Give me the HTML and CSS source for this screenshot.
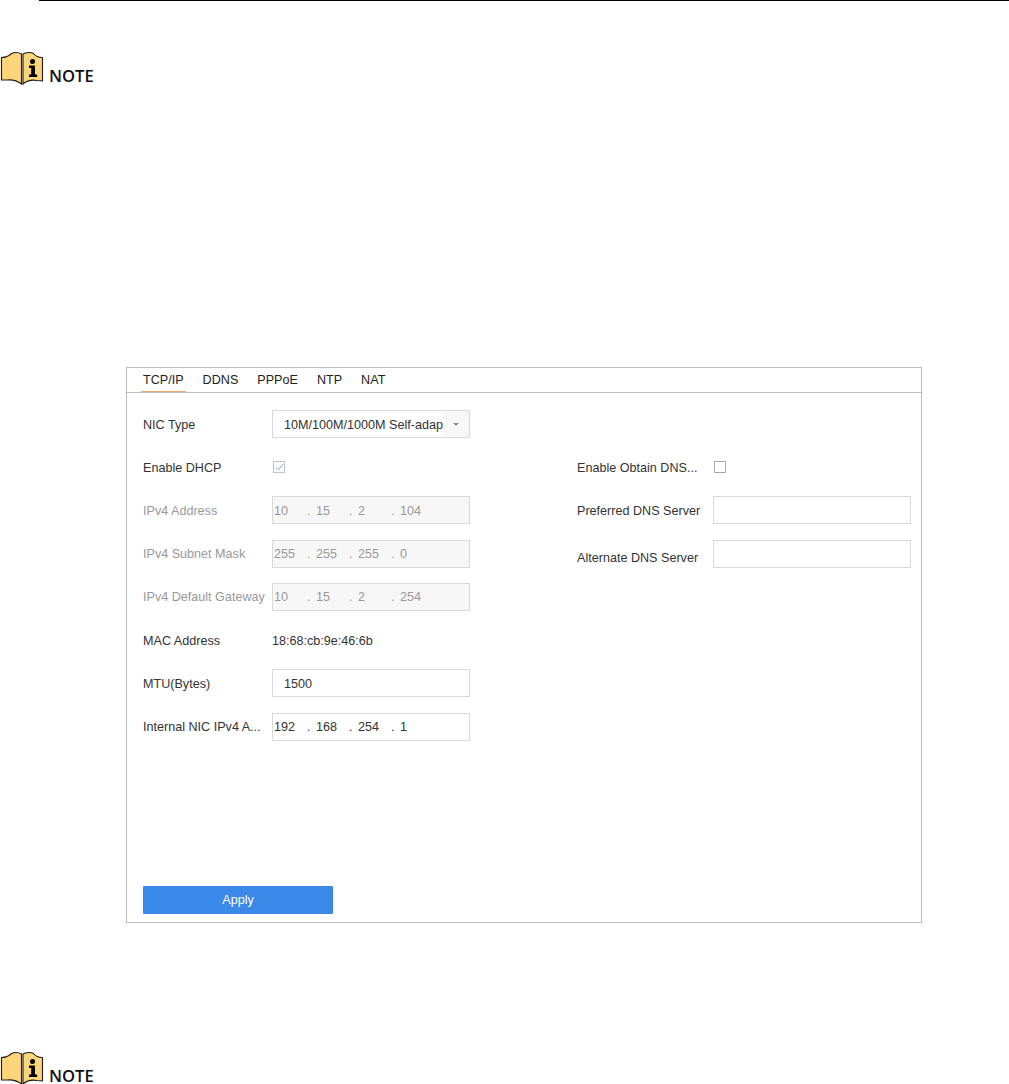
FILE: index.html
```html
<!DOCTYPE html>
<html lang="en">
<head>
<meta charset="utf-8">
<title>Network settings</title>
<link rel="stylesheet" href="styles.css">
</head>
<body>
<div class="page">
  <hr class="top-rule">
  <div class="note note-first">
    <svg class="note-icon" width="44" height="34" viewBox="0 0 44 34" aria-hidden="true">
      <path d="M1.5 6.5 C6 6.5 9 5 11.5 2.5 C15 1 19 1.5 21.5 3 L21.5 33 C17 29.5 12 28.5 7 29 L1.5 29 Z" fill="#fdd47a" stroke="#1c1c14" stroke-width="1.1"/>
      <path d="M23 3 C26 1.2 31 1 33.5 2.5 C35.5 5 38 6.5 42.5 6.5 L42.5 30 L37 29.5 C32 28.5 27 29.5 23 33 Z" fill="#fdd47a" stroke="#1c1c14" stroke-width="1.1"/>
      <circle cx="32.5" cy="10.5" r="2.5" fill="#000"/>
      <path d="M29 14.5 H35 V23.5 H37.2 V26 H29 V23.5 H31.2 V17 H29 Z" fill="#000"/>
    </svg>
    <span class="note-label">NOTE</span>
  </div>

  <section class="panel">
    <nav class="tabs">
      <span class="tab tab-active">TCP/IP</span>
      <span class="tab">DDNS</span>
      <span class="tab">PPPoE</span>
      <span class="tab">NTP</span>
      <span class="tab">NAT</span>
    </nav>
    <div class="form">
      <div class="col col-left">
        <div class="row">
          <span class="label">NIC Type</span>
          <div class="field field-select">
            <span class="select-value">10M/100M/1000M Self-adaptive</span>
            <span class="select-arrow"><i class="caret"></i></span>
          </div>
        </div>
        <div class="row">
          <span class="label">Enable DHCP</span>
          <span class="check check-on">
            <svg width="9" height="8" viewBox="0 0 9 8" aria-hidden="true"><path d="M1 4.5 L3.5 6.8 L8 1.2" fill="none" stroke="#7aa6dc" stroke-width="1"/></svg>
          </span>
        </div>
        <div class="row row-off">
          <span class="label">IPv4 Address</span>
          <div class="field field-ip field-off"><span class="oct">10</span><span class="dot">.</span><span class="oct">15</span><span class="dot">.</span><span class="oct">2</span><span class="dot">.</span><span class="oct">104</span></div>
        </div>
        <div class="row row-off">
          <span class="label">IPv4 Subnet Mask</span>
          <div class="field field-ip field-off"><span class="oct">255</span><span class="dot">.</span><span class="oct">255</span><span class="dot">.</span><span class="oct">255</span><span class="dot">.</span><span class="oct">0</span></div>
        </div>
        <div class="row row-off">
          <span class="label">IPv4 Default Gateway</span>
          <div class="field field-ip field-off"><span class="oct">10</span><span class="dot">.</span><span class="oct">15</span><span class="dot">.</span><span class="oct">2</span><span class="dot">.</span><span class="oct">254</span></div>
        </div>
        <div class="row">
          <span class="label">MAC Address</span>
          <span class="value">18:68:cb:9e:46:6b</span>
        </div>
        <div class="row">
          <span class="label">MTU(Bytes)</span>
          <div class="field field-text">1500</div>
        </div>
        <div class="row">
          <span class="label">Internal NIC IPv4 A...</span>
          <div class="field field-ip"><span class="oct">192</span><span class="dot">.</span><span class="oct">168</span><span class="dot">.</span><span class="oct">254</span><span class="dot">.</span><span class="oct">1</span></div>
        </div>
      </div>
      <div class="col col-right">
        <div class="row">
          <span class="label label-wide">Enable Obtain DNS...</span>
          <span class="check"></span>
        </div>
        <div class="row">
          <span class="label label-wide">Preferred DNS Server</span>
          <div class="field"></div>
        </div>
        <div class="row">
          <span class="label label-wide label-low">Alternate DNS Server</span>
          <div class="field"></div>
        </div>
      </div>
    </div>
    <button class="apply" type="button">Apply</button>
  </section>

  <div class="note note-last">
    <svg class="note-icon" width="44" height="34" viewBox="0 0 44 34" aria-hidden="true">
      <path d="M1.5 6.5 C6 6.5 9 5 11.5 2.5 C15 1 19 1.5 21.5 3 L21.5 33 C17 29.5 12 28.5 7 29 L1.5 29 Z" fill="#fdd47a" stroke="#1c1c14" stroke-width="1.1"/>
      <path d="M23 3 C26 1.2 31 1 33.5 2.5 C35.5 5 38 6.5 42.5 6.5 L42.5 30 L37 29.5 C32 28.5 27 29.5 23 33 Z" fill="#fdd47a" stroke="#1c1c14" stroke-width="1.1"/>
      <circle cx="32.5" cy="10.5" r="2.5" fill="#000"/>
      <path d="M29 14.5 H35 V23.5 H37.2 V26 H29 V23.5 H31.2 V17 H29 Z" fill="#000"/>
    </svg>
    <span class="note-label">NOTE</span>
  </div>
</div>
</body>
</html>
```

FILE: styles.css
```css
html, body {
  margin: 0;
  padding: 0;
  background: #fff;
}

.page {
  height: 1084px;
  overflow: hidden;
  display: flex;
  flex-direction: column;
  font-family: "Liberation Sans", Arial, sans-serif;
  font-size: 12.6px;
  color: #333;
}

.top-rule {
  margin: 0 0 0 39px;
  border: 0;
  height: 1px;
  background: #000;
  flex: none;
}

.note {
  flex: none;
  display: flex;
  align-items: flex-start;
  height: 34px;
}

.note-first {
  margin-top: 50px;
}

.note-last {
  margin-top: 128px;
}

.note-icon {
  flex: none;
  display: block;
}

.note-label {
  margin: 17px 0 0 5px;
  font-family: "Open Sans", sans-serif;
  font-weight: 600;
  font-size: 16.6px;
  line-height: 16px;
  color: #111;
}

.panel {
  flex: none;
  box-sizing: border-box;
  margin: 282px 0 0 126px;
  width: 796px;
  height: 556px;
  border: 1px solid #bdbdbd;
  display: flex;
  flex-direction: column;
  padding: 0 10px 0 16px;
}

.tabs {
  display: flex;
  gap: 15px;
  height: 24px;
  margin: 0 -10px 0 -16px;
  padding-left: 14px;
  border-bottom: 1px solid #bdbdbd;
  flex: none;
}

.tab {
  line-height: 24px;
  height: 24px;
  color: #222;
  padding: 0 2px;
  box-sizing: border-box;
}

.tab-active {
  border-bottom: 1px solid #f3a56f;
}

.form {
  display: flex;
  margin-top: 17px;
  flex: none;
}

.col {
  display: flex;
  flex-direction: column;
  gap: 15.22px;
}

.col-left {
  width: 434px;
}

.col-right {
  padding-top: 43.22px;
}

.row {
  display: flex;
  align-items: center;
  height: 28px;
}

.row-off .label {
  color: #999;
}

.label {
  width: 129px;
  flex: none;
  white-space: nowrap;
  padding-top: 1px;
}

.label-wide {
  width: 136px;
}

.label-low {
  padding-top: 9px;
}

.value {
  color: #333;
  padding-top: 1px;
}

.field {
  box-sizing: border-box;
  width: 198px;
  height: 28px;
  border: 1px solid #d9d9d9;
  background: #fff;
  flex: none;
}

.field-select {
  display: flex;
  align-items: center;
  padding-left: 11px;
}

.select-value {
  flex: 1;
  min-width: 0;
  white-space: nowrap;
  overflow: hidden;
  padding-top: 1px;
}

.select-arrow {
  width: 26px;
  height: 26px;
  background: #f7f7f7;
  display: flex;
  align-items: center;
  justify-content: center;
  flex: none;
}

.caret {
  display: block;
  width: 0;
  height: 0;
  border-left: 3px solid transparent;
  border-right: 3px solid transparent;
  border-top: 3px solid #888;
}

.field-text {
  line-height: 28px;
  padding-left: 11px;
}

.field-ip {
  display: flex;
  align-items: center;
  padding-left: 1px;
  padding-top: 1px;
}

.field-off {
  background: #f7f7f7;
  color: #999;
}

.oct {
  width: 33px;
  flex: none;
}

.dot {
  width: 9px;
  flex: none;
}

.check {
  box-sizing: border-box;
  width: 12px;
  height: 12px;
  margin-left: 1px;
  border: 1px solid #a8a8a8;
  background: #fff;
  display: flex;
  align-items: center;
  justify-content: center;
  flex: none;
}

.check-on {
  border-color: #c2c2c2;
}

.apply {
  flex: none;
  display: block;
  box-sizing: border-box;
  margin-top: 145px;
  width: 190px;
  height: 28px;
  border: 0;
  border-radius: 1px;
  padding: 0;
  background: #3a88e8;
  color: #fff;
  font-family: "Liberation Sans", Arial, sans-serif;
  font-size: 12.6px;
}
```
